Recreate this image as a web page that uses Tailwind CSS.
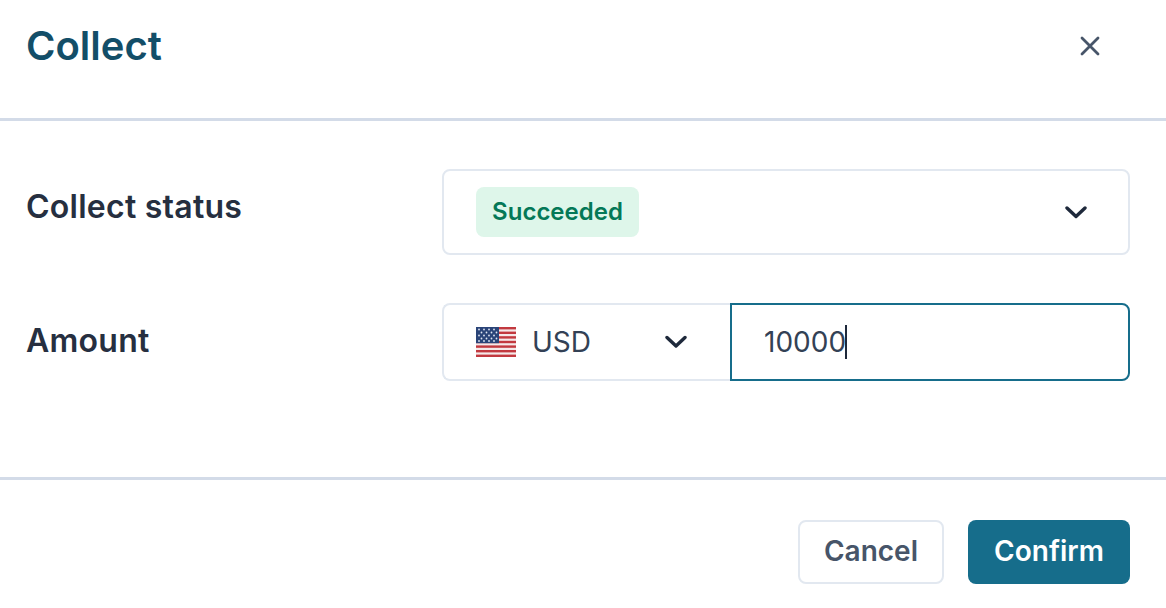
<!DOCTYPE html>
<html lang="en">
<head>
    <meta charset="UTF-8">
    <title>Collect</title>
    <script src="https://cdn.jsdelivr.net/npm/@tailwindcss/browser@4"></script>
</head>
<body class="bg-white font-['Inter',sans-serif] w-[1166px] h-[608px] overflow-hidden">
    <!-- header -->
    <div class="h-[121px] border-b-[3px] border-[#d3dbe8] pl-[26px] pr-[64px] pb-[26px] flex items-center justify-between">
        <h1 class="text-[40px] leading-[48px] font-semibold text-[#134e68]">Collect</h1>
        <svg class="w-[24px] h-[24px] text-[#475569]" viewBox="0 0 24 24" fill="none" stroke="currentColor" stroke-width="2.8" stroke-linecap="round">
            <path d="M4 4L20 20M20 4L4 20"/>
        </svg>
    </div>

    <!-- form -->
    <div class="h-[359px] border-b-[3px] border-[#d3dbe8] pl-[26px] pr-[36px] pt-[48px] flex flex-col gap-[48px]">
        <div class="flex items-start">
            <div class="w-[416px] pt-[18px] text-[32px] leading-[40px] font-semibold tracking-[0.25px] text-[#262f40]">Collect status</div>
            <div class="flex-1 h-[86px] border-2 border-[#e2e8f0] rounded-[8px] pl-[32px] pr-[41px] flex items-center justify-between">
                <span class="h-[50px] w-[163px] rounded-[8px] bg-[#def6ea] text-[#047857] text-[24px] font-semibold flex items-center justify-center">Succeeded</span>
                <svg class="w-[22px] h-[14px] text-[#1e293b]" viewBox="0 0 22 14" fill="none" stroke="currentColor" stroke-width="3.4" stroke-linecap="round" stroke-linejoin="round"><path d="M2 3L11 11.5L20 3"/></svg>
            </div>
        </div>
        <div class="flex items-center">
            <div class="w-[416px] -mt-[2px] text-[32px] leading-[40px] font-semibold tracking-[0.25px] text-[#262f40]">Amount</div>
            <div class="flex-1 h-[78px] flex">
                <div class="w-[288px] border-2 border-r-0 border-[#e2e8f0] rounded-l-[8px] pl-[32px] pr-[43px] flex items-center">
                    <svg class="w-[40px] h-[30px] shrink-0" viewBox="0 0 40 30">
                        <rect width="40" height="30" fill="#f5e9e9"/>
                        <g fill="#c2393f">
                            <rect y="0" width="40" height="2.4"/>
                            <rect y="4.6" width="40" height="2.4"/>
                            <rect y="9.2" width="40" height="2.4"/>
                            <rect y="13.8" width="40" height="2.4"/>
                            <rect y="18.4" width="40" height="2.4"/>
                            <rect y="23" width="40" height="2.4"/>
                            <rect y="27.6" width="40" height="2.4"/>
                        </g>
                        <rect width="23" height="16.2" fill="#2a4478"/>
                        <g fill="#dfe6f3">
                            <circle cx="3" cy="2.5" r=".9"/><circle cx="8" cy="2.5" r=".9"/><circle cx="13" cy="2.5" r=".9"/><circle cx="18" cy="2.5" r=".9"/>
                            <circle cx="5.5" cy="5.5" r=".9"/><circle cx="10.5" cy="5.5" r=".9"/><circle cx="15.5" cy="5.5" r=".9"/><circle cx="20.5" cy="5.5" r=".9"/>
                            <circle cx="3" cy="8.5" r=".9"/><circle cx="8" cy="8.5" r=".9"/><circle cx="13" cy="8.5" r=".9"/><circle cx="18" cy="8.5" r=".9"/>
                            <circle cx="5.5" cy="11.5" r=".9"/><circle cx="10.5" cy="11.5" r=".9"/><circle cx="15.5" cy="11.5" r=".9"/><circle cx="20.5" cy="11.5" r=".9"/>
                            <circle cx="3" cy="14" r=".9"/><circle cx="8" cy="14" r=".9"/><circle cx="13" cy="14" r=".9"/><circle cx="18" cy="14" r=".9"/>
                        </g>
                    </svg>
                    <span class="ml-[16px] text-[28px] text-[#334155]">USD</span>
                    <svg class="ml-auto w-[22px] h-[14px] text-[#1e293b]" viewBox="0 0 22 14" fill="none" stroke="currentColor" stroke-width="3.4" stroke-linecap="round" stroke-linejoin="round"><path d="M2 2.5L11 11L20 2.5"/></svg>
                </div>
                <div class="flex-1 border-2 border-[#166d8b] rounded-r-[8px] pl-[32px] flex items-center text-[28px] text-[#334155]">
                    10000<span class="inline-block -ml-[1px] w-[2px] h-[34px] bg-[#1e293b]"></span>
                </div>
            </div>
        </div>
    </div>

    <!-- footer -->
    <div class="pr-[36px] pt-[40px] flex justify-end gap-[24px]">
        <button class="w-[146px] h-[64px] pb-[2px] border-2 border-[#e2e8f0] rounded-[8px] text-[28px] font-semibold text-[#475569]">Cancel</button>
        <button class="w-[162px] h-[64px] pb-[2px] rounded-[8px] bg-[#166d8b] text-[28px] font-semibold text-white">Confirm</button>
    </div>
</body>
</html>
